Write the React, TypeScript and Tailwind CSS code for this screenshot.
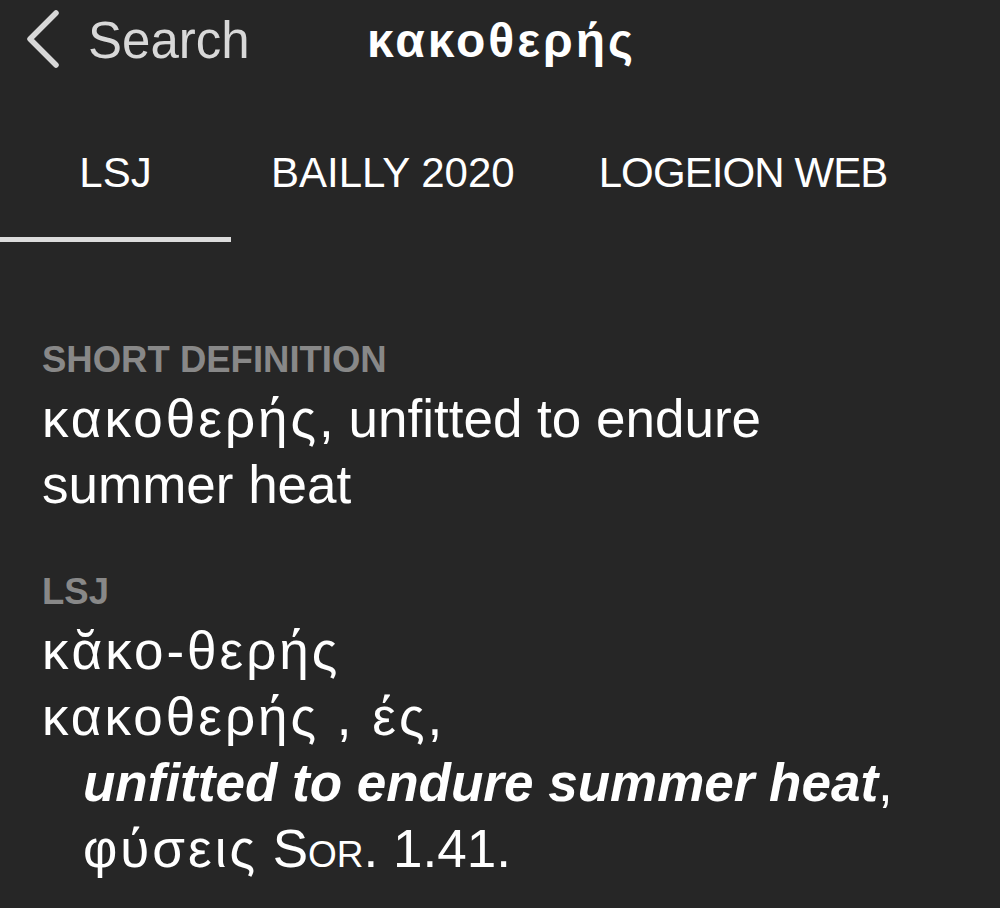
import React from "react";

function G({ children }: { children: React.ReactNode }) {
  return <span className="tracking-[3px]">{children}</span>;
}

export default function App() {
  return (
    <div
      className="min-h-screen w-full bg-[#262626] text-white overflow-hidden"
      style={{ fontFamily: '"Liberation Sans", Arial, Helvetica, sans-serif' }}
    >
      {/* Nav bar */}
      <div className="grid grid-cols-[1fr_auto_1fr] items-start pt-[16px] h-[82px]">
        <div className="flex items-center pl-[25px] h-[50px]">
          <svg width="36" height="60" viewBox="0 0 36 60" className="-mt-[4px]">
            <path
              d="M31 4 L5 30 L31 56"
              fill="none"
              stroke="#d8d8d8"
              strokeWidth="5.5"
              strokeLinecap="round"
              strokeLinejoin="round"
            />
          </svg>
          <span className="ml-[27px] text-[51px] leading-[50px] text-[#d8d8d8]">Search</span>
        </div>
        <div className="text-[48px] leading-[50px] font-bold text-white tracking-[3px] pl-[3px]">κακοθερής</div>
        <div />
      </div>

      {/* Tabs */}
      <div className="flex pt-[70px]">
        <div className="flex flex-col w-[231px]">
          <div className="text-center text-[42px] leading-[41px] text-white">LSJ</div>
          <div className="mt-[44px] h-[5px] bg-[#dcdcdc]" />
        </div>
        <div className="ml-[40px] text-[42px] leading-[41px] text-white">BAILLY 2020</div>
        <div className="ml-[84px] text-[42px] leading-[41px] text-white tracking-[-0.9px]">LOGEION WEB</div>
      </div>

      {/* Content */}
      <div className="px-[42px]">
        <div className="mt-[100px] text-[36.5px] leading-[36px] font-bold text-[#888888]">
          SHORT DEFINITION
        </div>
        <div className="mt-[8px] text-[53px] leading-[66px] text-white">
          <G>κακοθερής</G>, unfitted to endure summer heat
        </div>

        <div className="mt-[56px] text-[36.5px] leading-[36px] font-bold text-[#888888]">LSJ</div>
        <div className="mt-[8px] text-[53px] leading-[66px] text-white">
          <div>
            <G>κᾰκο-θερής</G>
          </div>
          <div>
            <G>κακοθερής , ές</G>,
          </div>
          <div className="pl-[41px] whitespace-nowrap">
            <span className="font-bold italic">unfitted to endure summer heat</span>,
          </div>
          <div className="pl-[41px]">
            <G>φύσεις</G> S<span className="[font-variant-caps:small-caps]">or</span>. 1.41.
          </div>
        </div>
      </div>
    </div>
  );
}
